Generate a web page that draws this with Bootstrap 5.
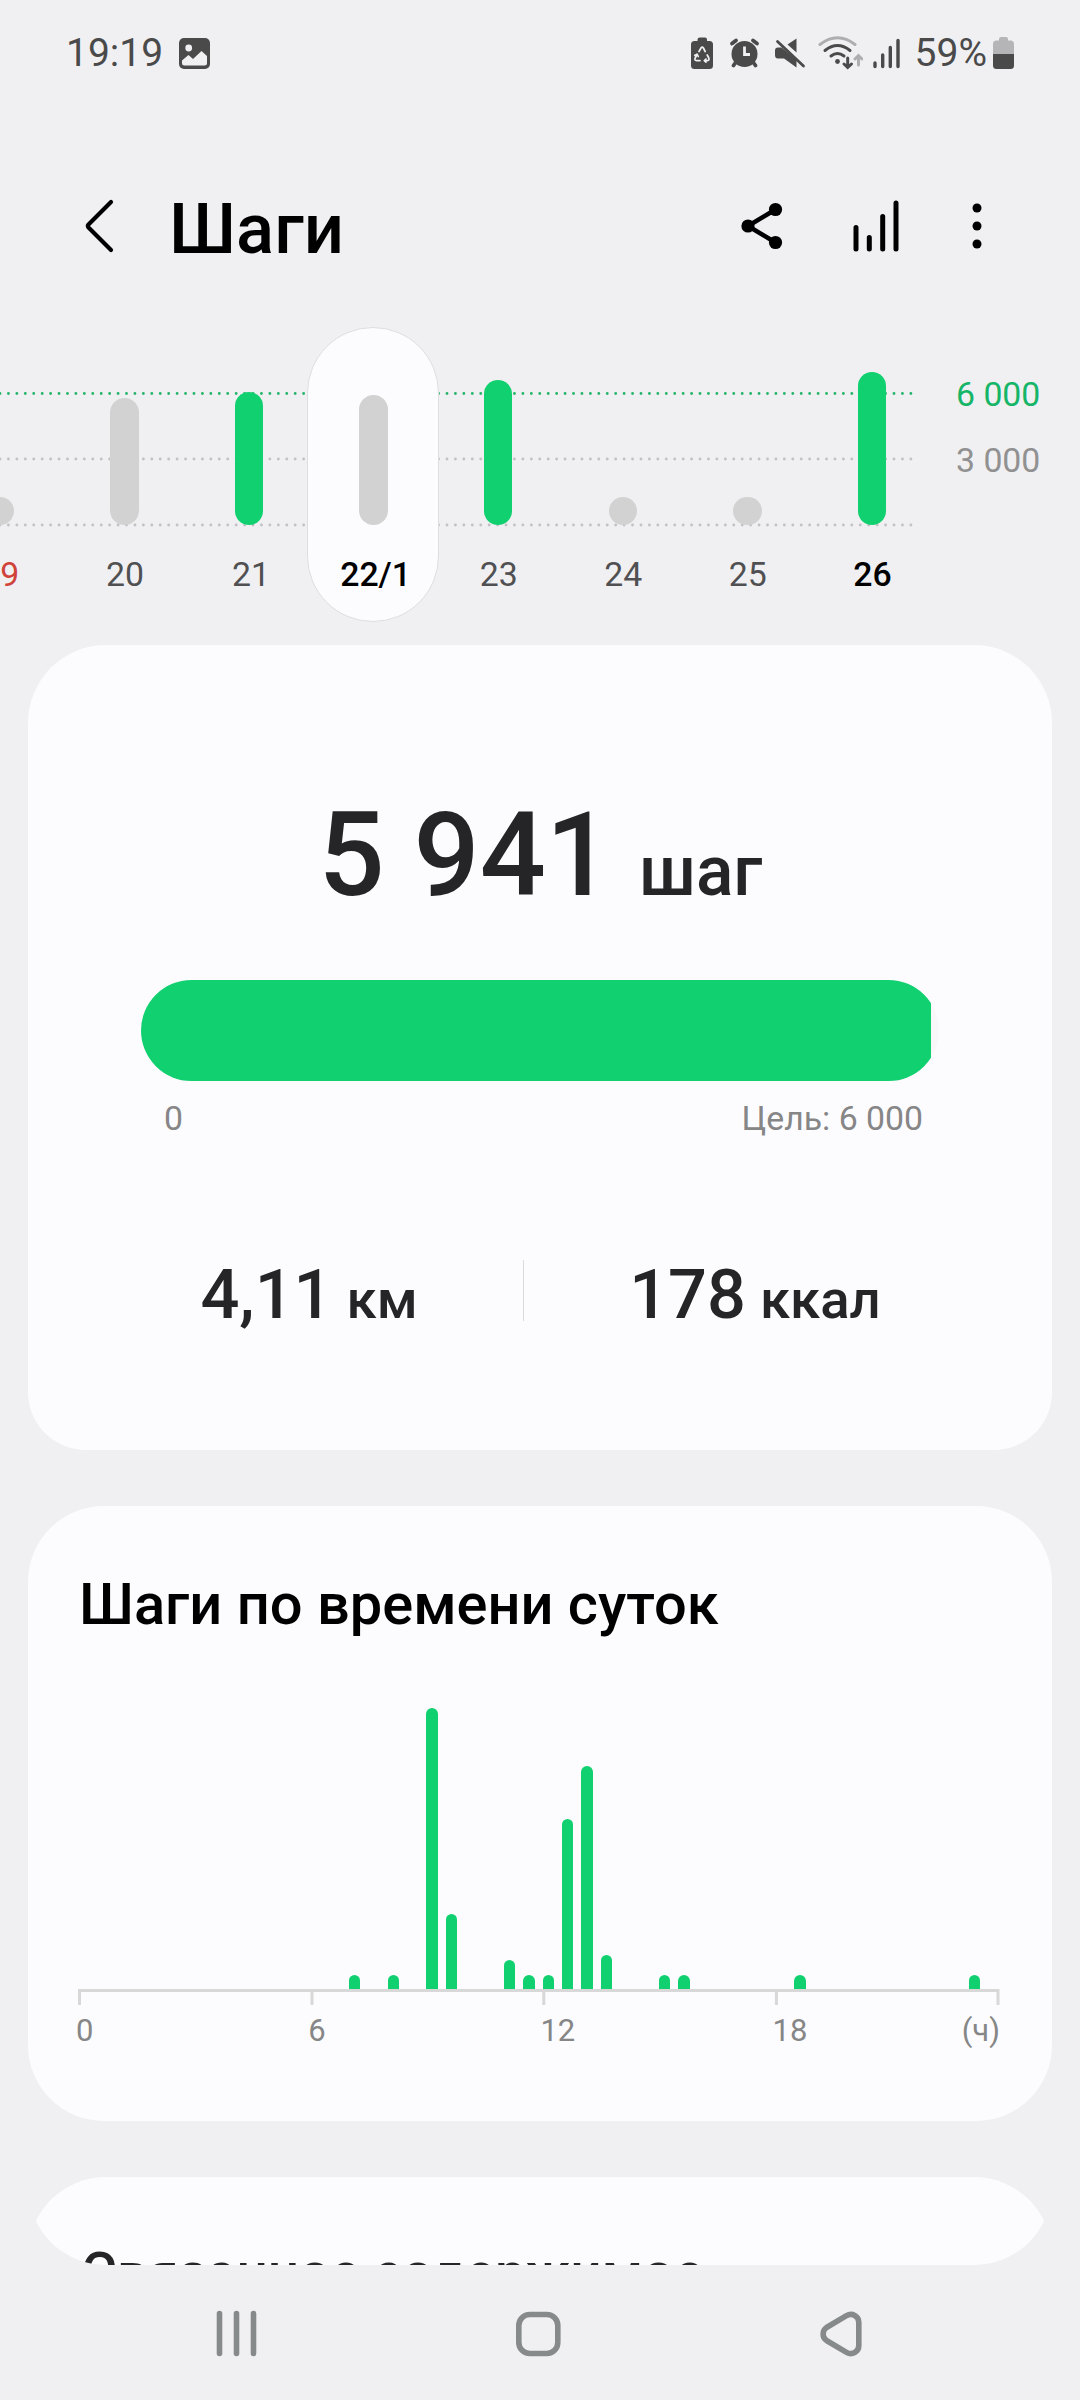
<!DOCTYPE html>
<html lang="ru">
<head>
<meta charset="utf-8">
<meta name="viewport" content="width=device-width, initial-scale=1">
<title>Шаги</title>
<link href="https://cdn.jsdelivr.net/npm/bootstrap@5.3.0/dist/css/bootstrap.min.css" rel="stylesheet">
<style>
  :root { --go: #11d06f; --idle: #d2d2d2; --ink: #252528; --soft: #868686; }
  body { width: 1080px; height: 2400px; background: #f0f0f3; color: var(--ink); font-family: Roboto, "Noto Sans", sans-serif; }
  svg { display: block; flex: none; }
  .status { height: 106px; padding: 0 66px; font-size: 39px; color: #4a4a4a; line-height: 46px; }
  .appbar { height: 200px; margin-top: 20px; color: #000; }
  .appbar h1 { font-size: 70.6px; line-height: 80px; padding-top: 6px; }
  /* week strip */
  .week { height: 319px; }
  .days { margin-left: -62.5px; }
  .day { width: 124.6px; position: relative; font-size: 33.8px; color: #505052; }
  .slot { height: 199px; }
  .pillar { width: 28.5px; border-radius: 15px; background: var(--idle); }
  .pillar.done { background: var(--go); }
  .day-label { margin-top: 30px; line-height: 40px; padding-left: 1px; }
  .nudged .day-label { padding-left: 4px; }
  .day.chosen::before { content: ""; position: absolute; left: -4px; top: 1px; width: 132px; height: 295px; border: 1px solid #dedee0; border-radius: 66px; background: #fcfcff; }
  .day.chosen > * { position: relative; }
  .strong-day { font-weight: 500; color: #000; }
  .sunday { color: #d0433a; }
  .scale { width: 124px; padding-top: 49px; font-size: 33.8px; line-height: 40px; color: #919191; }
  .scale .goal { color: #16b568; margin-bottom: 26px; }
  /* cards */
  .feed { width: 1024px; height: 1620px; border-radius: 0 0 78px 78px; gap: 56px; }
  .tile { background: #fcfcff; flex: none; }
  .total { height: 805px; padding: 150px 113px 0; border-radius: 78px 78px 58px 58px; }
  .count { height: 120px; font-size: 116.4px; line-height: 120px; padding-left: 1px; }
  .unit { font-size: 69.5px; margin-left: 27px; }
  .progress { --bs-progress-height: 101px; --bs-progress-bg: #f8f8fb; --bs-progress-bar-bg: var(--go); --bs-progress-border-radius: 50.5px; margin-top: 65px; }
  .limits { font-size: 33.8px; line-height: 40px; color: var(--soft); margin-top: 18px; padding: 0 16px 0 23px; }
  .stats { height: 61px; margin: 121px -49px 0 -46px; }
  .stat { height: 61px; font-size: 68.5px; line-height: 69px; }
  .stat-distance { width: 428px; }
  .stat-energy { width: 462px; }
  .stat span { font-size: 54.5px; margin-left: 14px; }
  .rule { width: 1px; background: #dadadc; }
  .hours { height: 615px; padding: 63px 49px 0 50px; border-radius: 76px; }
  .tile h2 { font-size: 57.8px; line-height: 70px; padding-left: 1px; }
  .bars { height: 350px; margin: 0 0 0 -4px; }
  .bars > div { flex: 1; display: flex; justify-content: center; }
  .bars i { width: 11.4px; border-radius: 6px 6px 0 0; background: var(--go); }
  .ticks { margin: 6px 0 0 -2px; padding-right: 3px; font-size: 31px; line-height: 40px; color: var(--soft); }
  .ticks > .mark-6h { width: 232.2px; }
  .related { height: 400px; padding: 61px 51px 0; border-radius: 78px; }
  .related h2 { font-size: 55px; padding-left: 2px; }
  .keys { height: 135px; padding-top: 2px; }
</style>
</head>
<body class="overflow-hidden">

<header class="status d-flex align-items-center">
  <span>19:19</span>
  <svg class="ms-3" width="31" height="31" viewBox="0 0 31 31"><rect width="31" height="31" rx="5" fill="#4a4a4a"/><circle cx="9.700" cy="10" r="3.400" fill="#f0f0f3"/><path d="M3 22.500 L9.500 17 L14 21 L22.500 13 L28 18 V25 Q28 27.500 25.500 27.500 H5.500 Q3 27.500 3 25Z" fill="#f0f0f3"/></svg>
  <svg class="ms-auto" width="173" height="34" viewBox="690 36 173 34" fill="#4a4a4a">
    <path d="M700 37.500h5q2 0 2 2v1.500h2.500q3.500 0 3.500 3.500v21q0 3.500-3.500 3.500h-15q-3.500 0-3.500-3.500v-21q0-3.500 3.500-3.500h3v-1.500q0-2 2.500-2z"/>
    <g fill="none" stroke="#f0f0f3" stroke-width="1.700" stroke-linejoin="round" stroke-linecap="round"><path d="M699 51.500L701 48Q702.200 46.300 703.400 48L705.200 51.500M707.200 55L708.800 58Q709.600 60.600 707.400 60.600H704.500M700 60.600H696.500Q694.200 60.600 695.200 58L697 54.500"/><path d="M694.800 55.300L697.200 54.300L698.200 56.500M706 59L704.500 60.600L706 62.200"/></g>
    <circle cx="744.500" cy="54" r="13"/><path d="M736 62l-2.500 3.500M753 62l2.500 3.500M732 43.500l4-3M757 43.500l-4-3" stroke="#4a4a4a" stroke-width="3.800" stroke-linecap="round"/><path d="M744.500 46.500V54.500H750" fill="none" stroke="#f0f0f3" stroke-width="2.800"/>
    <path d="M796.500 38.500V52.500L787.500 44.500zM778 47.500H781.500L796.500 60V67.500L784 58.500H778Q775 58.500 775 55V50.500Q775 47.500 778 47.500z"/><path d="M777.500 41.500L803.500 66" stroke="#4a4a4a" stroke-width="2.800" stroke-linecap="round"/>
    <g fill="none" stroke="#4a4a4a" stroke-width="3" stroke-linecap="round"><path d="M820 44.500Q837.500 31 855 44.500" stroke="#aeaeb0"/><path d="M825 50.500Q837.500 40.500 850 50.500M831 56Q837.500 51 844 56"/><path d="M847.700 58V67M844 64L847.700 67.500L851.500 64"/><path d="M858.500 65V55.500M855 59L858.500 55.500L862 59" stroke="#aeaeb0"/></g><circle cx="837.500" cy="61.500" r="2.400"/>
  </svg>
  <svg style="margin-left:10px" width="27" height="31" viewBox="0 0 27 31" stroke="#4a4a4a" stroke-width="3.400" stroke-linecap="round"><path d="M2 25v3.500M9.700 17v11.500M17.300 9.500v19M25 2.500v26"/></svg>
  <span style="margin-left:15px">59%</span>
  <svg style="margin-left:6px" width="21" height="32" viewBox="0 0 21 32"><path d="M8 0h5q2 0 2 2v1.500h2.500Q21 3.500 21 7v10H0V7Q0 3.500 3.500 3.500H6V2q0-2 2-2z" fill="#b5b5b8"/><path d="M0 17h21v11.500q0 3.500-3.500 3.500h-14Q0 32 0 28.500z" fill="#4a4a4a"/></svg>
</header>

<nav class="appbar d-flex align-items-center">
  <svg style="margin-left:84px" width="30" height="54" viewBox="0 0 30 54" fill="none" stroke="#000" stroke-width="4.200" stroke-linecap="round" stroke-linejoin="round"><path d="M27 3L4.500 25.500Q3.200 27 4.500 28.500L27 51"/></svg>
  <h1 class="mb-0 fw-medium" style="margin-left:55px">Шаги</h1>
  <svg class="ms-auto" width="42" height="48" viewBox="0 0 42 48"><path d="M34.500 7.500L7 24L34.500 40.500" fill="none" stroke="#000" stroke-width="4.600"/><circle cx="34.500" cy="7.500" r="6.600"/><circle cx="7" cy="24" r="6.600"/><circle cx="34.500" cy="40.500" r="6.600"/></svg>
  <svg style="margin-left:70px" width="46" height="52" viewBox="0 0 46 52" stroke="#000" stroke-width="5" stroke-linecap="round"><path d="M3 27.500v21.500M16.300 37.500v11.500M29.700 16.500v32.500M43 3v46"/></svg>
  <svg style="margin-left:73px;margin-right:98px" width="10" height="46" viewBox="0 0 10 46"><circle cx="5" cy="5" r="4.500"/><circle cx="5" cy="23" r="4.500"/><circle cx="5" cy="41" r="4.500"/></svg>
</nav>

<section class="week d-flex position-relative">
  <svg class="position-absolute top-0 start-0" width="920" height="210" fill="none" stroke-width="2.900" stroke-linecap="round" stroke-dasharray="0 8.434"><path d="M0 67.500H913" stroke="#27b56c"/><path d="M0 133H913M0 199H913" stroke="#c2c2c5"/></svg>
  <div class="days d-flex text-center" id="days"></div>
  <div class="scale ms-auto"><div class="goal">6 000</div><div>3 000</div></div>
</section>

<main class="feed mx-auto overflow-hidden d-flex flex-column">
  <section class="tile total">
    <div class="count fw-medium d-flex align-items-baseline justify-content-center">5 941<span class="unit">шаг</span></div>
    <div class="progress"><div class="progress-bar" style="width:99%"></div></div>
    <div class="limits d-flex justify-content-between"><span>0</span><span>Цель: 6 000</span></div>
    <div class="stats d-flex text-center fw-medium">
      <div class="stat stat-distance">4,11<span>км</span></div><div class="rule"></div><div class="stat stat-energy">178<span>ккал</span></div>
    </div>
  </section>

  <section class="tile hours">
    <h2 class="mb-0 fw-medium text-black">Шаги по времени суток</h2>
    <div class="bars d-flex align-items-end" id="bars"></div>
    <svg width="922" height="16" viewBox="0 0 922 16" fill="none" stroke="#d8d8d8" stroke-width="3"><path d="M0 1.500H921M1.500 0V16M234 0V16M465.800 0V16M698.400 0V16M920 0V16"/></svg>
    <div class="ticks d-flex"><div class="mark-6h">0</div><div class="mark-6h">6</div><div class="mark-6h">12</div><div>18</div><div class="ms-auto">(ч)</div></div>
  </section>

  <section class="tile related">
    <h2 class="mb-0 fw-medium">Связанное содержимое</h2>
  </section>
</main>

<footer class="keys d-flex align-items-center">
  <svg style="margin-left:216px" width="41" height="47" viewBox="0 0 41 47" stroke="#868a8a" stroke-width="5.600" stroke-linecap="round"><path d="M3.500 3.500v40M20.500 3.500v40M37.500 3.500v40"/></svg>
  <svg style="margin-left:259px" width="45" height="46" viewBox="0 0 45 46" fill="none" stroke="#868a8a" stroke-width="5.600"><rect x="2.800" y="3.500" width="39" height="39" rx="11"/></svg>
  <svg style="margin-left:259px" width="42" height="46" viewBox="0 0 42 46" fill="none" stroke="#868a8a" stroke-width="5.600" stroke-linejoin="round"><path d="M26.500 4.700C32 1.500 38.800 5 38.800 11.500V34.500C38.800 41 32 44.500 26.500 41.300L6.500 29.500C2 26.500 2 19.500 6.500 16.500Z"/></svg>
</footer>

<script src="https://cdn.jsdelivr.net/npm/bootstrap@5.3.0/dist/js/bootstrap.bundle.min.js"></script>
<script>
  // label, pillar height, goal reached, extra classes
  const days = [['19',28.5,0,'sunday'],['20',127.5,0,''],['21',133,1,'nudged'],['22/1',130,0,'chosen strong-day nudged'],['23',145.5,1,''],['24',28.5,0,''],['25',28.5,0,''],['26',153.5,1,'strong-day']];
  document.getElementById('days').innerHTML = days.map(([d,h,ok,c]) =>
    `<div class="day ${c}"><div class="slot d-flex align-items-end justify-content-center"><div class="pillar ${ok?'done':''}" style="height:${h}px"></div></div><div class="day-label">${d}</div></div>`).join('');
  // half-hour slots
  const half = {14:14.5,16:14.5,18:281,19:75,22:29,23:14.5,24:14.5,25:170.5,26:223.5,27:34,30:14.5,31:14.5,37:14.5,46:14.5};
  document.getElementById('bars').innerHTML = Array.from({length:48}, (_,i) =>
    `<div>${half[i] ? `<i style="height:${half[i]}px"></i>` : ''}</div>`).join('');
</script>
</body>
</html>
